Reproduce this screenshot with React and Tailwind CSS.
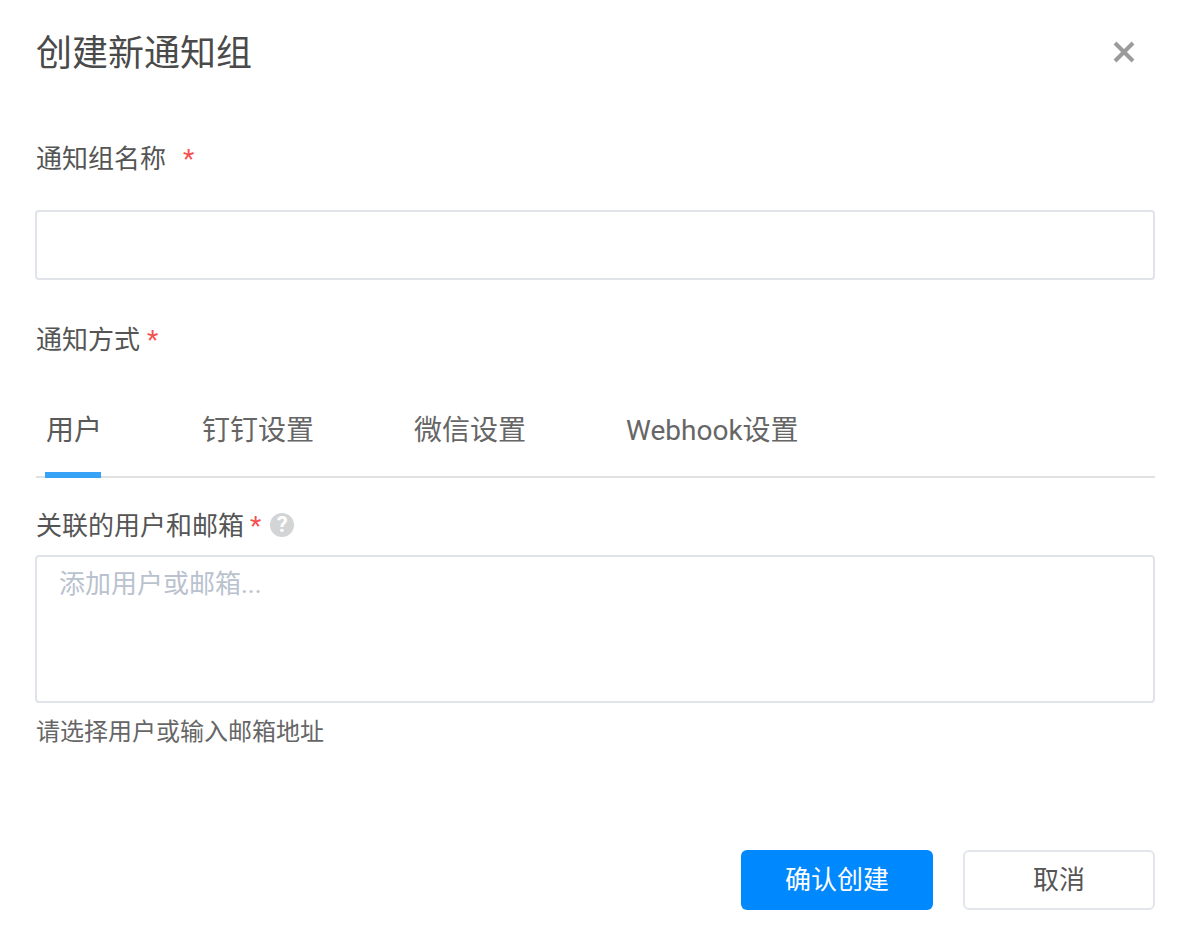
const fontStack = 'font-["Roboto","Noto_Sans_CJK_SC",sans-serif]'

function Required({ className = '' }) {
    return <span className={`text-[#f5504f] ${className}`}>*</span>
}

function Tab({ label, active, className = '' }) {
    return (
        <div className={`relative h-[85px] pt-[14px] text-[28px] leading-[48px] ${className}`}>
            <span className={active ? 'text-[#595959]' : 'text-[#666]'}>{label}</span>
            {active && <div className="absolute left-[-1px] right-[1px] bottom-0 h-[6px] bg-[#36a3f7]"></div>}
        </div>
    )
}

export default function App() {
    return (
        <div className={`w-[1192px] h-[940px] bg-white pl-[36px] pr-[37px] overflow-hidden ${fontStack}`}>
            <div className="flex items-center justify-between h-[104px]">
                <h1 className="pt-[4px] text-[36px] leading-[104px] font-normal text-[#4a4a4a]">创建新通知组</h1>
                <button className="mr-[20px]" aria-label="close">
                    <svg width="22" height="22" viewBox="0 0 22 22" fill="none" stroke="#9b9b9b" strokeWidth="4">
                        <path d="M2 2 L20 20 M20 2 L2 20" />
                    </svg>
                </button>
            </div>

            <div className="h-[106px] flex items-start pt-[33px] text-[26px] leading-[44px] text-[#555]">
                <span>通知组名称</span>
                <Required className="ml-[17px]" />
            </div>
            <input className="block w-[1120px] h-[70px] -ml-[1px] border-2 border-[#e0e4ea] rounded-[4px] outline-none" />

            <div className="mt-[38px] text-[26px] leading-[44px] text-[#555]">
                通知方式<Required className="ml-[7px]" />
            </div>

            <div className="mt-[39px] flex border-b-2 border-[#e1e1e1] h-[77px] pl-[10px]">
                <div className="flex items-start -mt-[8px]">
                    <Tab label="用户" active />
                    <Tab label="钉钉设置" className="ml-[100px]" />
                    <Tab label="微信设置" className="ml-[100px]" />
                    <Tab label="Webhook设置" className="ml-[100px]" />
                </div>
            </div>

            <div className="mt-[26px] h-[51px] flex items-start text-[26px] leading-[44px] text-[#555]">
                <span>关联的用户和邮箱</span>
                <Required className="ml-[6px]" />
                <span className="ml-[9px] mt-[9px] w-[24px] h-[24px] rounded-full bg-[#d2d4d6] text-white text-[22px] leading-[24px] font-bold text-center">?</span>
            </div>
            <textarea
                placeholder="添加用户或邮箱..."
                className="block w-[1120px] h-[148px] -ml-[1px] border-2 border-[#e0e4ea] rounded-[4px] px-[22px] py-[5px] text-[26px] leading-[44px] resize-none outline-none placeholder:text-[#b9c2ce]"
            ></textarea>

            <p className="mt-[8px] text-[24px] leading-[42px] text-[#666]">请选择用户或输入邮箱地址</p>

            <div className="mt-[97px] flex justify-end gap-[30px]">
                <button className="w-[192px] h-[60px] rounded-[6px] bg-[#0088ff] text-white text-[26px]">确认创建</button>
                <button className="w-[192px] h-[60px] rounded-[6px] border-2 border-[#e2e5ec] bg-white text-[#555] text-[26px]">取消</button>
            </div>
        </div>
    )
}
